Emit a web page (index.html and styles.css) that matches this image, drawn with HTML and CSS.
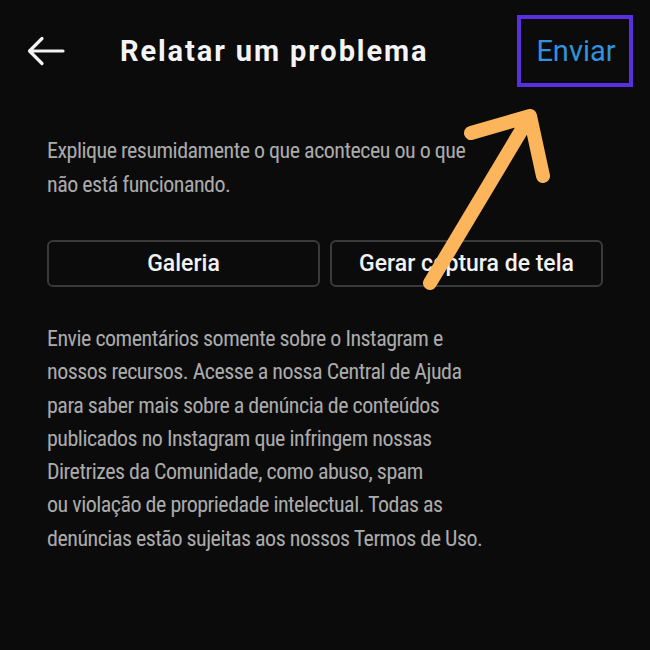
FILE: index.html
```html
<!DOCTYPE html>
<html lang="pt">
<head>
<meta charset="utf-8">
<link rel="stylesheet" href="styles.css">
</head>
<body>
<div class="screen">
  <header class="bar">
    <svg class="back" width="38" height="30" viewBox="0 0 38 30">
      <path d="M36 15H3M15 2.5L2.5 15L15 27.5" fill="none" stroke="#f2f2f2" stroke-width="3.2" stroke-linecap="round" stroke-linejoin="round"/>
    </svg>
    <h1 class="title">Relatar um problema</h1>
    <div class="send">Enviar</div>
  </header>
  <main class="content">
    <p class="intro">Explique resumidamente o que aconteceu ou o que<br>não está funcionando.</p>
    <div class="buttons">
      <div class="btn">Galeria</div>
      <div class="btn">Gerar captura de tela</div>
    </div>
    <p class="info">Envie comentários somente sobre o Instagram e<br>nossos recursos. Acesse a nossa Central de Ajuda<br>para saber mais sobre a denúncia de conteúdos<br>publicados no Instagram que infringem nossas<br>Diretrizes da Comunidade, como abuso, spam<br>ou violação de propriedade intelectual. Todas as<br>denúncias estão sujeitas aos nossos Termos de Uso.</p>
  </main>
  <svg class="pointer" width="650" height="650" viewBox="0 0 650 650">
    <path d="M430 283L530 116M471 133L530 116L543 176" fill="none" stroke="#fdb55b" stroke-width="14" stroke-linecap="round" stroke-linejoin="round"/>
  </svg>
</div>
</body>
</html>
```
FILE: styles.css
```css
html, body {
  margin: 0;
  padding: 0;
  background: #0b0b0b;
}
.screen {
  position: relative;
  width: 650px;
  height: 650px;
  background: #0b0b0b;
  font-family: Roboto, "Noto Sans", sans-serif;
  overflow: hidden;
}
.bar {
  display: flex;
  align-items: center;
  height: 102px;
  padding: 0 17px 0 27px;
}
.back {
  display: block;
  flex: none;
}
.title {
  margin: 0 0 0 55px;
  flex: 1;
  font-size: 29px;
  font-weight: 700;
  letter-spacing: 1.9px;
  color: #f4f4f4;
}
.send {
  box-sizing: border-box;
  width: 116px;
  height: 72px;
  border: 4px solid #5a2fe2;
  color: #3292dc;
  font-size: 29px;
  display: flex;
  align-items: center;
  justify-content: center;
  padding-left: 2px;
}
.content {
  padding: 0 47px;
}
.intro {
  margin: 32px 0 0;
  font-size: 22px;
  font-stretch: 75%;
  letter-spacing: -0.5px;
  line-height: 34px;
  color: #ababab;
  white-space: nowrap;
}
.buttons {
  display: grid;
  grid-template-columns: 1fr 1fr;
  gap: 10px;
  margin-top: 38px;
}
.btn {
  box-sizing: border-box;
  height: 47px;
  border: 2px solid #3a3a3a;
  border-radius: 6px;
  display: flex;
  align-items: center;
  justify-content: center;
  color: #f2f2f2;
  font-size: 23px;
  font-stretch: 91%;
  font-weight: 500;
}
.info {
  margin: 35px 0 0;
  font-size: 22px;
  font-stretch: 75%;
  letter-spacing: -0.5px;
  line-height: 33.3px;
  color: #ababab;
  white-space: nowrap;
}
.pointer {
  position: absolute;
  left: 0;
  top: 0;
}
```
